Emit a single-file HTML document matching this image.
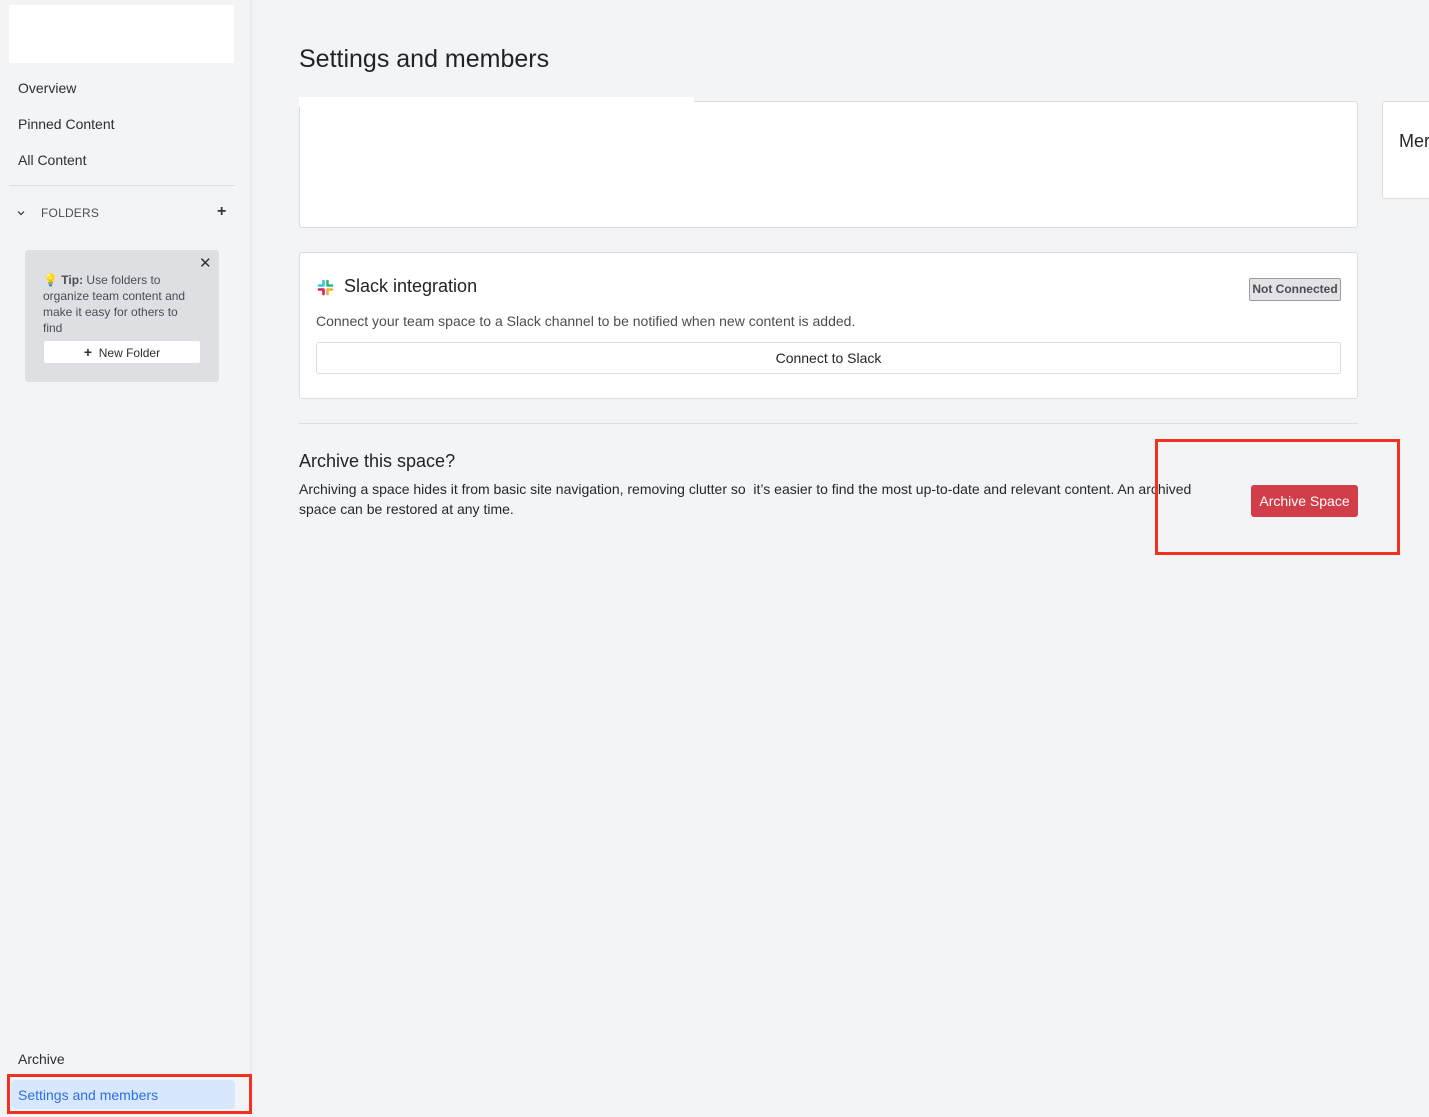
<!DOCTYPE html>
<html><head><meta charset="utf-8"><style>
*{box-sizing:border-box;margin:0;padding:0}
body{width:1429px;height:1117px;overflow:hidden;background:#f3f4f6;font-family:"Liberation Sans",sans-serif;color:#24272b;position:relative}
.sb{position:absolute;left:0;top:0;width:251px;height:1117px;background:#f3f4f6;border-right:1px solid #e6e7ea;box-shadow:1px 0 3px rgba(0,0,0,.04)}
.abs{position:absolute}
.nav{position:absolute;left:18px;font-size:14px;color:#2b2e33}
</style></head><body>
<div class="sb">
 <div class="abs" style="left:9px;top:5px;width:225px;height:58px;background:#fff"></div>
 <div class="nav" style="top:80px">Overview</div>
 <div class="nav" style="top:116px">Pinned Content</div>
 <div class="nav" style="top:152px">All Content</div>
 <div class="abs" style="left:9px;top:185px;width:226px;height:1px;background:#dcdde0"></div>
 <svg class="abs" style="left:17px;top:209px" width="8" height="8" viewBox="0 0 8 8"><path d="M1 2.5L4 5.5L7 2.5" stroke="#333" stroke-width="1.2" fill="none"/></svg>
 <div class="abs" style="left:41px;top:206px;font-size:12px;color:#4a4d52;letter-spacing:.2px">FOLDERS</div>
 <div class="abs" style="left:217px;top:203px;font-size:16px;font-weight:bold;color:#333">+</div>
 <div class="abs" style="left:25px;top:250px;width:194px;height:132px;background:#dedfe2;border-radius:3px">
  <div class="abs" style="left:174px;top:4px;font-size:15px;color:#333">✕</div>
  <div class="abs" style="left:18px;top:22px;width:148px;font-size:12px;line-height:16px;color:#4a4d52"><span style="color:#e8d06a">💡</span> <b>Tip:</b> Use folders to organize team content and make it easy for others to find</div>
  <div class="abs" style="left:19px;top:91px;width:156px;height:22px;background:#fff;border-radius:2px;font-size:12px;text-align:center;line-height:22px;color:#2b2e33"><b style="font-size:14px">+</b>&nbsp; New Folder</div>
 </div>
 <div class="nav" style="top:1051px">Archive</div>
 <div class="abs" style="left:11px;top:1080px;width:224px;height:29px;background:#d7e7fd;border-radius:4px"></div>
 <div class="nav" style="top:1087px;color:#2f6fe0">Settings and members</div>
 <div class="abs" style="left:7px;top:1074px;width:245px;height:40px;border:3px solid #f2311e"></div>
</div>
<div class="abs" style="left:299px;top:45px;font-size:25px;color:#1f2226">Settings and members</div>
<div class="abs" style="left:299px;top:101px;width:1059px;height:127px;background:#fff;border:1px solid #dcdde0;border-radius:3px"></div>
<div class="abs" style="left:299px;top:97px;width:395px;height:10px;background:#fff"></div>
<div class="abs" style="left:1382px;top:101px;width:60px;height:98px;background:#fff;border:1px solid #dcdde0;border-radius:3px"><div class="abs" style="left:16px;top:29px;font-size:18px">Mer</div></div>
<div class="abs" style="left:299px;top:252px;width:1059px;height:147px;background:#fff;border:1px solid #dcdde0;border-radius:3px">
 <svg class="abs" style="left:17px;top:26px" width="17" height="17" viewBox="0 0 17 17"><g stroke-linecap="round" stroke-width="2.6"><path d="M6.5 2v4.5M2 6.5h4.5" stroke="#36c5f0"/><path d="M10.5 2v4.5M10.5 6.5h4.5" stroke="#2eb67d"/><path d="M6.5 10.5v4.5M2 10.5h4.5" stroke="#e01e5a"/><path d="M10.5 10.5v4.5M10.5 10.5h4.5" stroke="#ecb22e"/></g></svg>
 <div class="abs" style="left:44px;top:23px;font-size:18px;color:#1f2226">Slack integration</div>
 <div class="abs" style="left:949px;top:25px;width:92px;height:23px;background:#e2e3e6;border:1px solid #9a9ca1;border-radius:2px;font-size:12px;font-weight:bold;color:#4a4d52;text-align:center;line-height:21px">Not Connected</div>
 <div class="abs" style="left:16px;top:60px;font-size:14px;color:#4a4d52">Connect your team space to a Slack channel to be notified when new content is added.</div>
 <div class="abs" style="left:16px;top:89px;width:1025px;height:32px;border:1px solid #dcdde0;border-radius:3px;text-align:center;line-height:30px;font-size:14px;color:#1f2226">Connect to Slack</div>
</div>
<div class="abs" style="left:299px;top:423px;width:1059px;height:1px;background:#dcdde0"></div>
<div class="abs" style="left:299px;top:451px;font-size:18px;color:#1f2226">Archive this space?</div>
<div class="abs" style="left:299px;top:479px;width:920px;font-size:14px;line-height:20px;color:#24272b">Archiving a space hides it from basic site navigation, removing clutter so&nbsp; it’s easier to find the most up-to-date and relevant content. An archived space can be restored at any time.</div>
<div class="abs" style="left:1251px;top:485px;width:107px;height:32px;background:#d13d48;border-radius:3px;color:#fff;font-size:14px;text-align:center;line-height:32px">Archive Space</div>
<div class="abs" style="left:1155px;top:439px;width:245px;height:116px;border:3px solid #f2311e"></div>
</body></html>
